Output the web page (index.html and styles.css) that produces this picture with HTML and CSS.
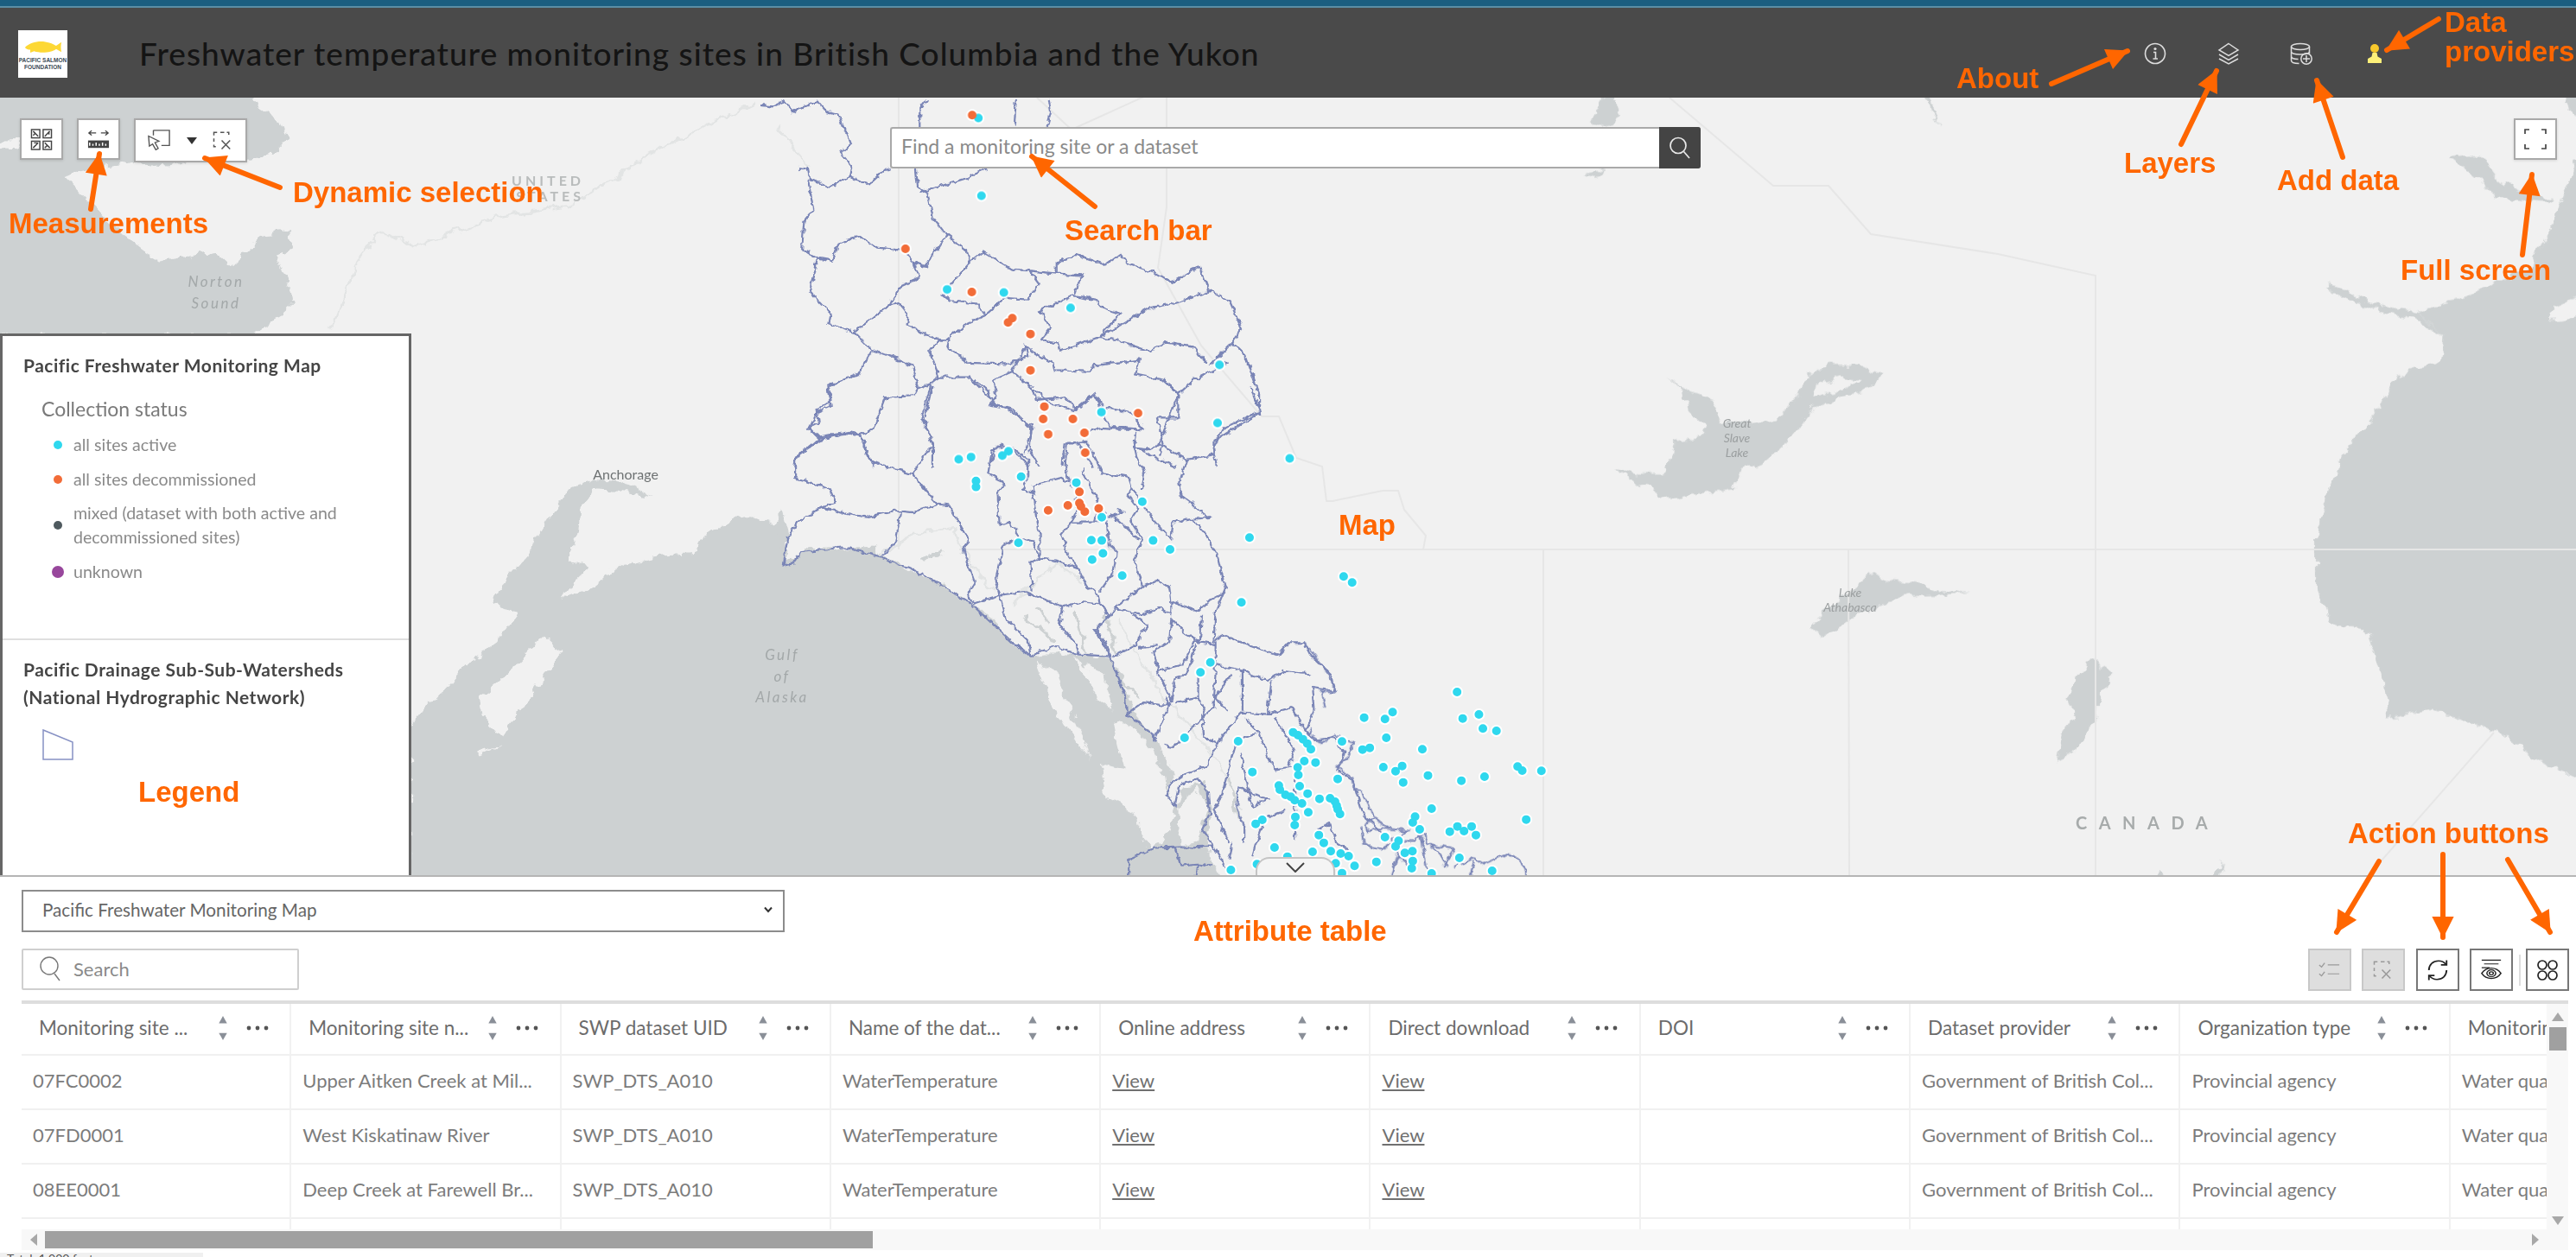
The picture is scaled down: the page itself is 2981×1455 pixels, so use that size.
FILE: index.html
```html
<!DOCTYPE html>
<html lang="en">
<head>
<meta charset="utf-8">
<title>Freshwater temperature monitoring sites in British Columbia and the Yukon</title>
<link rel="stylesheet" href="styles.css">
</head>
<body>
<svg class="defs" width="0" height="0" aria-hidden="true">
  <defs>
    <symbol id="i-sort" viewBox="0 0 12 32"><path d="M6 1l5 9H1z" fill="#8a8f98"/><path d="M6 31l5-9H1z" fill="#8a8f98"/></symbol>
    <symbol id="i-more" viewBox="0 0 26 6"><circle cx="3" cy="3" r="2.4" fill="#555"/><circle cx="13" cy="3" r="2.4" fill="#555"/><circle cx="23" cy="3" r="2.4" fill="#555"/></symbol>
    <symbol id="i-clear" viewBox="0 0 32 32" preserveAspectRatio="none"><path d="M2 8V3h5M12 3h6M22 3h3v4M2 13v5M2 23v3h3" fill="none" stroke="currentColor" stroke-width="2"/><path d="M14 16l13 14M27 16L14 30" fill="none" stroke="currentColor" stroke-width="2"/></symbol>
    <filter id="rough" filterUnits="userSpaceOnUse" x="880" y="113" width="1060" height="900">
      <feTurbulence type="fractalNoise" baseFrequency="0.13" numOctaves="2" seed="4"/>
      <feDisplacementMap in="SourceGraphic" scale="7" xChannelSelector="R" yChannelSelector="G"/>
    </filter>
    <filter id="coast" filterUnits="userSpaceOnUse" x="-20" y="90" width="3040" height="950">
      <feTurbulence type="fractalNoise" baseFrequency="0.07" numOctaves="3" seed="9"/>
      <feDisplacementMap in="SourceGraphic" scale="14" xChannelSelector="R" yChannelSelector="G"/>
    </filter>
    <g id="sheds">
      <g transform="translate(850 100) scale(.4464 .3333)">
        <path d="M50 40L60 65L100 70L130 50L150 90L215 50L240 90L270 100L300 200L275 230L305 280L300 315L350 340L390 290L405 285"/>
        <path d="M165 290L170 280L190 285L195 320L245 350L300 315M190 320L205 430L180 470L175 565L215 595L195 710L250 790L245 825L310 855L355 915"/>
        <path d="M215 595L255 605L270 545L325 520L370 560L440 570L465 610L495 625L550 515L600 570L610 610L645 575L720 635L765 640L835 650L900 655L880 725"/>
        <path d="M465 610L480 665L430 695L400 760L425 750L450 790L445 830L530 880L550 880L600 825L650 795L700 735L760 740L790 685L765 640M650 795L630 755L560 745L540 725L590 640L610 610M310 855L400 760"/>
        <path d="M530 880L555 880L550 905L610 960L710 965L760 935L755 900L780 930L825 960L830 985L925 990L930 970L1050 950L1040 1000L1115 1020L1150 1070L1190 1020L1280 960L1235 965L1290 890L1325 935L1360 1070L1360 1130L1265 1190L1240 1260L1250 1320"/>
        <path d="M880 725L790 780L800 790L820 840L795 880L840 890L845 920L945 870L1000 790L955 770L935 740L880 730M945 870L1075 770L1150 750L1235 710L1285 750L1315 840L1290 890M835 650L835 610L885 585L960 620L1000 580L1020 615L1095 650L1135 680L1205 625L1230 710M945 870L990 880L1075 920L1120 890L1190 905L1225 960"/>
        <path d="M755 900L720 990L765 1040L820 1100L880 1125L930 1070L960 1115L1030 1135L1060 1190L1000 1190L950 1185L915 1200M720 990L670 1020L680 1075L660 1105L720 1120L770 1190L765 1260L790 1320"/>
        <path d="M355 915L410 940L460 970L475 1050L510 1030L530 1010L610 1010L660 1080M530 1010L505 920L530 880M355 920L320 1000L240 1040L250 1110L215 1130L195 1185L220 1220L160 1290L155 1320M475 1050L465 1075L390 1080L360 1190L325 1210L345 1280L360 1320M220 1220L300 1200L325 1210M510 1030L485 1150L515 1240L515 1320"/>
        <path d="M660 1320L680 1250L720 1260L765 1320M850 1320L855 1240L890 1240L930 1320M1040 1200L1035 1250L1095 1290L1145 1320M1095 1150L1110 1240L1100 1280M1150 1070L1150 1150L1095 1150"/>
        <path d="M480 140L480 80L500 45M725 140L730 45M810 140L820 90L815 45M470 285L475 350L500 370L515 460L550 515M480 370L540 345L600 320L655 285"/>
      </g>
      <g transform="translate(900 440) scale(.4464 .3827)">
        <path d="M130 15L140 60L100 90L105 130L80 145L110 180L45 235L45 295L135 330L150 370L115 385L180 405L235 415L310 395L350 400L415 375L445 380L470 430L495 490L480 510L510 610L490 655L510 675L575 650L640 640L740 685L790 670L835 675L860 715"/>
        <path d="M115 385L50 430L25 480L15 560L40 555L60 520L170 505L270 535L380 590L500 675L550 730L610 795L655 835L715 805L780 830L860 835M320 400L305 490L270 530M215 170L240 245L350 285L415 375M350 285L385 215L405 205L380 120L400 20M110 180L180 160L215 170"/>
        <path d="M575 650L590 720L650 790L655 835M575 650L565 600L585 500L630 480L660 490L680 540L720 545L780 570L800 620L830 650L835 675M680 540L655 550L660 640M740 685L730 740L775 800L780 830M835 675L860 715L825 750L865 835M860 715L875 690L940 710L990 690L1020 710L1020 670L1090 700L1120 665L1160 640"/>
        <path d="M630 480L600 430L575 440L570 340L590 310L545 285L555 215L580 195L615 210L650 240L650 290L635 330L665 345L660 320L735 295L760 315L745 260L750 190L800 185L825 240L840 280L910 295L920 330L905 345L935 390L915 425L945 480L925 545L945 625L870 690M660 345L680 470L680 540M735 295L790 330L770 360L775 400L760 430L820 430L830 360L800 300L790 270M760 430L735 465L755 535L780 570M820 430L870 410L895 400L880 390M850 400L860 500L880 520L870 580L835 640M870 410L935 480"/>
        <path d="M945 625L985 605L1015 625L1020 670M920 330L965 410L1020 480L1025 430L1075 420L1105 460L1140 530L1160 630L1135 700L1130 790L1150 770L1220 800L1280 825L1300 830L1325 795L1365 795L1380 830L1435 890L1445 940L1385 930L1390 1000L1370 1060M1025 430L1060 420"/>
        <path d="M920 180L930 230L950 280L945 330M920 205L960 210L990 195L1060 240L1040 310L1045 350L1120 415L1075 420M1060 240L1130 225L1130 185L1205 130L1250 100L1225 20M1000 0L1040 40L985 200M950 150L860 140L820 40L775 90L745 50L670 60L660 20M660 140L600 90L555 70L545 30L510 0M660 140L640 220M950 150L920 100"/>
        <path d="M820 750L860 835L900 950L905 1010L975 1075L975 1090L1015 980L1005 960M905 1010L950 975L1005 985L1020 970L985 880M985 880L975 820L1015 790L1020 720M930 810L985 800M870 835L930 800L945 760L960 740L920 710M1020 720L1060 770L1095 790L1100 710"/>
        <path d="M1020 970L1030 900L1060 890L1085 800M985 880L1050 860L1080 790L1135 800M1135 790L1135 880M1135 860L1210 880L1270 910L1310 880L1380 890M1030 975L1090 960L1110 1010L1130 990L1135 880M1090 960L1090 880M1110 1010L1060 1070L1025 1110L1000 1105"/>
        <path d="M1100 1010L1105 1080L1140 1100L1110 1170L1060 1190L1020 1220L1005 1250L1030 1285L1040 1225L1090 1205L1115 1245L1120 1310L1100 1360L1130 1410M1140 1100L1170 1050L1200 1005L1270 1010L1280 910M1205 880L1205 1000M1175 890L1135 960L1165 1000M1270 1010L1330 990L1370 1060L1390 1090L1440 1080L1470 1130L1450 1180L1490 1210L1520 1320L1568 1370"/>
        <path d="M1210 1020L1250 1070L1270 1140L1290 1180L1340 1170M1240 1070L1190 1090L1170 1170L1150 1260L1130 1300L1170 1400M1200 1130L1230 1290L1270 1270L1195 1230L1190 1290L1210 1350L1210 1400M1290 1020L1340 1120L1320 1170M1340 1200L1340 1390M1250 1330L1320 1300M1400 1360L1430 1340L1450 1400L1480 1420M1180 1400L1170 1450M1260 1330L1240 1400L1230 1440"/>
        <path d="M910 1500L910 1450L975 1415L1130 1410L1170 1490M1030 1415L1045 1470L1090 1465L1085 1500M1090 1465L1125 1470"/>
      </g>
      <g transform="translate(1300 750) scale(.3827 .3333)">
        <path d="M640 150L620 90L560 0M640 155L600 150L610 210M570 280L560 300L600 330L640 305L695 330L680 380L645 410L690 450L695 480L720 500L740 545L760 590L735 610L740 640L770 625L860 635L820 670L790 650M760 590L800 625M720 620L725 680L780 700L810 680L840 725"/>
        <path d="M840 670L880 670L905 640L920 680L1000 700L965 760M1000 760L1060 730L1090 750L1160 715L1190 730L1215 765L1218 790M925 680L960 720L980 760M810 790L830 720L870 770M900 650L920 790M1050 790L1060 740"/>
      </g>
    </g>
    <g id="dots-c">
      <path transform="translate(850 100) scale(.4464 .3333)" d="M632 110h.1M640 380h.1M551 705h.1M698 716h.1M871 769h.1M1257 967h.1M951 1131h.1M1252 1169h.1M581 1295h.1M613 1287h.1M694 1282h.1M710 1267h.1M1439 1292h.1"/>
      <path transform="translate(900 440) scale(.4464 .3827)" d="M631 292h.1M514 305h.1M514 323h.1M774 310h.1M945 368h.1M840 415h.1M624 492h.1M813 484h.1M840 485h.1M843 524h.1M815 543h.1M893 591h.1M973 485h.1M1017 512h.1M1223 476h.1M1467 594h.1M1489 612h.1M1202 672h.1"/>
      <path transform="translate(1300 750) scale(.3827 .3333)" d="M263 50h.1M233 85h.1M1009 153h.1M814 223h.1M791 247h.1M728 242h.1M1026 245h.1M1075 231h.1M1087 280h.1M1128 288h.1M795 312h.1M661 325h.1M723 353h.1M745 347h.1M904 352h.1M513 293h.1M528 303h.1M543 317h.1M556 332h.1M567 352h.1M185 312h.1M347 324h.1M547 393h.1M581 398h.1M527 415h.1M1192 412h.1M1206 426h.1M1264 427h.1M786 414h.1M843 410h.1M823 428h.1M921 443h.1M846 467h.1M1022 461h.1M1092 447h.1M390 431h.1M529 441h.1M648 455h.1M533 480h.1M470 478h.1M473 492h.1M490 510h.1M506 517h.1M518 529h.1M557 506h.1M593 524h.1M625 522h.1M640 534h.1M645 548h.1M655 577h.1M648 560h.1M540 540h.1M932 558h.1M882 586h.1M875 606h.1M896 630h.1M520 587h.1M559 571h.1M518 615h.1M420 597h.1M400 611h.1M1218 596h.1M1010 620h.1M1053 620h.1M987 638h.1M1030 636h.1M1066 650h.1M591 650h.1M606 677h.1M627 706h.1M657 714h.1M681 723h.1M791 657h.1M832 670h.1M823 689h.1M457 693h.1M572 708h.1M874 706h.1M851 712h.1M875 740h.1M872 765h.1M642 748h.1M699 757h.1M765 743h.1M661 782h.1M404 751h.1M325 771h.1M496 725h.1M1016 729h.1M1115 774h.1M932 783h.1"/>
    </g>
    <g id="dots-o">
      <path transform="translate(850 100) scale(.4464 .3333)" d="M616 100h.1M443 564h.1M615 714h.1M720 805h.1M709 820h.1M767 860h.1M767 986h.1M803 1112h.1M800 1155h.1M877 1155h.1M1046 1135h.1M813 1208h.1M907 1203h.1M909 1272h.1"/>
      <path transform="translate(900 440) scale(.4464 .3827)" d="M782 338h.1M752 379h.1M782 372h.1M786 382h.1M796 398h.1M832 388h.1M701 394h.1"/>
    </g>
    <marker id="head" viewBox="0 0 10 10" refX="9.5" refY="5" markerWidth="4.6" markerHeight="4.2" orient="auto"><path d="M0 0L10 5L0 10z" fill="#ff6600"/></marker>
  </defs>
</svg>

<div class="app">
  <div class="topline"></div>
  <header class="header">
    <div class="logo">
      <svg class="logo-fish" viewBox="0 0 50 20"><path d="M1 11C8 4 22 1 33 5C37 6 40 8 42 9L49 4C48 8 48 13 49 17L42 13C36 18 22 19 13 16L8 18L8 14C5 14 3 13 1 11Z" fill="#fdd835"/></svg>
      <span class="logo-text">PACIFIC SALMON FOUNDATION</span>
    </div>
    <h1 class="title">Freshwater temperature monitoring sites in British Columbia and the Yukon</h1>
    <nav class="header-icons">
      <span class="hicon"><svg width="26" height="26" viewBox="0 0 26 26" fill="none" stroke="#ddd" stroke-width="1.6"><circle cx="13" cy="13" r="11.5"/><circle cx="13" cy="7.5" r="1.6" fill="#ddd" stroke="none"/><path d="M11 11.5h2.5v7M10.5 19h5.5"/></svg></span>
      <span class="hicon"><svg width="26" height="26" viewBox="0 0 26 26" fill="none" stroke="#ddd" stroke-width="1.5"><path d="M13 1.5L24 9L13 15.5L2 9z"/><path d="M2 14l11 6.5L24 14M2 19l11 6L24 19"/></svg></span>
      <span class="hicon"><svg width="26" height="26" viewBox="0 0 26 26" fill="none" stroke="#ddd" stroke-width="1.5"><ellipse cx="12" cy="5" rx="10.5" ry="3.5"/><path d="M1.5 5v16c0 2.500 5 3.500 9 3.500M22.500 5v8M1.500 10.500c0 2.500 5 3.500 10.500 3.500s10.500-1 10.500-3.500M1.500 16c0 2.500 4 3.500 8 3.500"/><circle cx="19" cy="19" r="6.200"/><path d="M19 15v8M15 19h8"/></svg></span>
      <span class="hicon"><svg width="16" height="22" viewBox="0 0 16 22"><ellipse cx="8" cy="5" rx="5" ry="5" fill="#f8c92c"/><path d="M5.500 10h5l1 4.500L16 17v5H0v-5l4.500-2.500z" fill="#fdf079"/></svg></span>
    </nav>
  </header>

  <main class="map">
    <svg class="basemap" viewBox="0 113 2981 900" preserveAspectRatio="none">
      <rect x="0" y="113" width="2981" height="900" fill="#f1f1f1"/>
      <g class="water" filter="url(#coast)">
        <g transform="translate(0 113) scale(.6378 .574)">
          <path d="M745 1620L745 1265L770 1230L810 1190L850 1140L900 1100L925 1060L940 1040L895 1020L905 990L960 920L985 870L1030 790L1080 770L1130 775L1180 805L1130 795L1080 785L1055 825L1050 880L1030 935L1075 940L1040 975L1020 1010L1070 990L1130 940L1190 925L1260 920L1280 880L1350 840L1405 860L1420 835L1430 880L1425 940L1470 910L1590 905L1590 1620Z"/>
          <path d="M-30 -30L455 -30L470 20L510 50L520 80L495 110L450 125L400 120L300 135L240 130L170 140L115 155L160 205L215 270L290 330L390 310L420 340L470 285L525 265L530 300L500 320L525 380L530 420L510 440L450 480L-30 480Z"/>
          <path class="land" d="M870 1210L930 1150L985 1085L1020 1120L960 1210L910 1290L875 1250ZM1025 1010L1070 945L1030 935L1050 880L1058 825L1080 800L1110 850L1100 960ZM865 1320L910 1305L870 1325ZM-30 88L40 85L30 105L-30 100Z"/>
        </g>
        <g transform="translate(900 440) scale(.4464 .3827)">
          <path d="M0 460L20 560L60 520L170 503L270 535L380 590L500 675L550 720L610 795L655 835L690 830L760 830L860 835L895 900L920 1000L975 1080L1000 1130L1030 1190L1010 1250L1030 1290L1050 1230L1100 1210L1130 1300L1110 1400L1170 1560L0 1560Z"/>
          <path class="land" d="M668 845L720 880L760 1000L790 1080L810 1165L800 1130L770 1090L740 1030L725 1030L700 940ZM770 840L850 900L870 1000L830 960L800 900ZM870 1030L930 1060L960 1100L1000 1190L1030 1300L1000 1400L960 1410L920 1300L850 1260L840 1160L900 1180L880 1090ZM1040 1295L1085 1225L1112 1300L1092 1390L1045 1402Z"/>
        </g>
        <g transform="translate(1800 113) scale(.753 .574)">
          <path d="M1568 130L1530 260L1500 340L1400 400L1330 430L1365 480L1360 530L1290 560L1270 620L1210 720L1190 780L1170 880L1170 990L1190 1060L1245 1070L1270 1170L1280 1250L1350 1235L1450 1280L1500 1330L1600 1395L1600 130Z"/>
          <path class="land" d="M1600 385L1535 420L1530 450L1600 440Z"/>
          <path d="M1375 120L1420 112L1450 165L1480 190L1535 205L1530 212L1445 203L1418 165ZM1548 -20L1600 -20L1600 60L1560 40ZM1185 375L1200 380L1260 420L1330 430L1365 480L1320 445L1260 428L1195 395Z"/>
          <path d="M168 560L200 590L240 610L255 650L305 660L340 650L380 590L385 560L420 538L470 540L505 560L480 590L440 605L395 625L380 655L350 705L315 738L285 750L275 790L210 800L175 808L130 780L90 750L130 760L165 760L185 695L225 685L230 660L205 630L195 590Z"/>
          <path class="land" d="M400 580L440 565L470 570L435 590L395 605Z"/>
          <path d="M390 1065L420 1030L450 1000L485 958L510 975L560 980L590 995L640 998L590 1003L550 1005L510 1018L470 1040L430 1075L410 1090Z"/>
          <path d="M800 1170L825 1135L838 1145L855 1160L840 1200L830 1260L795 1320L770 1340L780 1280L800 1240L785 1220Z"/>
          <path d="M905 1585L930 1560L945 1585ZM1005 1585L1025 1540L1020 1585ZM50 50L85 -20L100 40L70 60ZM40 155L85 142L60 160ZM560 -20L570 -20L590 60Z"/>
        </g>
      </g>
      <g class="borders">
        <path d="M1040 113V636M1110 636H2981M1786 636V1013M1932 113L2052 215L2116 215L2165 271L2312 294L2425 319V1013M2139 636L2140 1013M2886 848L2741 1013"/>
        <path d="M1200 113L1240 150L1350 100L1350 240L1340 310L1390 400L1460 482L1480 482L1500 530L1530 540L1535 580L1542 580L1600 568L1618 568L1625 590L1650 620L1647 636"/>
      </g>
      <g class="rivers" filter="url(#coast)">
        <g transform="translate(0 113) scale(.6378 .574)"><path d="M600 470L650 330L690 270L750 300L900 240L1030 220L1200 100L1370 10M1410 60L1470 140"/></g>
        <g transform="translate(900 440) scale(.4464 .3827)"><path d="M270 535L350 460L460 450L480 520L560 640M610 680L720 550L790 610M880 720L1000 960L1140 1150L1200 1300"/></g>
        <g class="channels" transform="translate(900 440) scale(.4464 .3827)"><path d="M640 710L720 790M670 690L700 730M770 700L800 830M850 720L880 830M370 545L430 520M870 880L940 960M1170 1200L1190 1320"/></g>
      </g>
      <g filter="url(#rough)">
        <use href="#sheds" class="shed-line"/>
      </g>
      <use href="#dots-c" class="dot-halo"/>
      <use href="#dots-o" class="dot-halo"/>
      <use href="#dots-c" class="dot-c"/>
      <use href="#dots-o" class="dot-o"/>
      <g class="places">
        <text class="pl-spaced" x="676" y="215" text-anchor="end">UNITED</text>
        <text class="pl-spaced" x="676" y="233" text-anchor="end">STATES</text>
        <text class="pl-water" x="250" y="332" text-anchor="middle">Norton</text>
        <text class="pl-water" x="250" y="357" text-anchor="middle">Sound</text>
        <text class="pl-city" x="724" y="555" text-anchor="middle">Anchorage</text>
        <text class="pl-water" x="905" y="764" text-anchor="middle">Gulf</text>
        <text class="pl-water" x="905" y="789" text-anchor="middle">of</text>
        <text class="pl-water" x="905" y="813" text-anchor="middle">Alaska</text>
        <text class="pl-lake" x="2010" y="495" text-anchor="middle">Great</text>
        <text class="pl-lake" x="2010" y="512" text-anchor="middle">Slave</text>
        <text class="pl-lake" x="2010" y="529" text-anchor="middle">Lake</text>
        <text class="pl-lake" x="2141" y="691" text-anchor="middle">Lake</text>
        <text class="pl-lake" x="2141" y="708" text-anchor="middle">Athabasca</text>
        <text class="pl-country" x="2402" y="960">CANADA</text>
      </g>
    </svg>

    <div class="map-tools">
      <button class="tool">
        <svg width="26" height="25" viewBox="0 0 26 26" fill="none" stroke="#444" stroke-width="1.5"><rect x="1" y="1" width="10" height="10"/><rect x="15" y="1" width="10" height="10"/><rect x="1" y="15" width="10" height="10"/><rect x="15" y="15" width="10" height="10"/><path d="M3 3l6 6M3 8l3-3M23 3l-6 6M22 3v4M3 23l6-6M4 17h5M17 17l6 6M17 23l3-3"/></svg>
      </button>
      <button class="tool">
        <svg width="26" height="22" viewBox="0 0 28 28" preserveAspectRatio="none" fill="none" stroke="#444" stroke-width="1.600"><path d="M11 5H2M5.500 1.500L2 5l3.500 3.500M17 5h9M22.500 1.500L26 5l-3.500 3.500"/><rect x="1" y="16" width="26" height="11" fill="#444" stroke="none"/><path d="M3 24V19M7 24V21M11 24V19M15 24V21M19 24V19M23 24V21" stroke="#fff"/></svg>
      </button>
      <div class="tool tool-group">
        <svg width="26" height="25" viewBox="0 0 28 30" preserveAspectRatio="none" fill="none" stroke="#555" stroke-width="1.500"><path d="M7 1H27V22H17M7 1V8"/><path d="M1 9L14 16L9 18L13 26L10 28L6 20L2 23Z" fill="#fff"/></svg>
        <svg width="12" height="8" viewBox="0 0 12 8"><path d="M0 0H12L6 8Z" fill="#333"/></svg>
        <svg class="clear-icon" width="24" height="23"><use href="#i-clear" width="24" height="23"/></svg>
      </div>
    </div>

    <div class="searchbar">
      <span class="searchbar-text">Find a monitoring site or a dataset</span>
      <button class="searchbar-btn"><svg width="26" height="28" viewBox="0 0 26 28" fill="none" stroke="#e8e8e8" stroke-width="1.700"><circle cx="11" cy="11.500" r="9"/><path d="M17.500 18.500L24 26"/></svg></button>
    </div>

    <button class="tool fullscreen">
      <svg width="26" height="24" viewBox="0 0 26 24" fill="none" stroke="#444" stroke-width="1.700"><path d="M1 6V1H6M20 1H25V6M1 18V23H6M20 23H25V18"/></svg>
    </button>

    <aside class="legend">
      <section class="legend-section first">
        <h2 class="legend-title">Pacific Freshwater Monitoring Map</h2>
        <h3 class="legend-sub">Collection status</h3>
        <ul class="legend-list">
          <li><i class="swatch sw-cyan"></i><span>all sites active</span></li>
          <li><i class="swatch sw-orange"></i><span>all sites decommissioned</span></li>
          <li><i class="swatch sw-dark"></i><span>mixed (dataset with both active and decommissioned sites)</span></li>
          <li><i class="swatch sw-purple"></i><span>unknown</span></li>
        </ul>
      </section>
      <section class="legend-section">
        <h2 class="legend-title second">Pacific Drainage Sub-Sub-Watersheds (National Hydrographic Network)</h2>
        <svg class="legend-poly" width="36" height="36" viewBox="0 0 36 36"><path d="M1 1L35 15V35H1Z" fill="#fff" stroke="#8791c4" stroke-width="1.500"/></svg>
      </section>
    </aside>

    <button class="collapse-tab"><svg width="24" height="12" viewBox="0 0 24 12" fill="none" stroke="#444" stroke-width="2"><path d="M2 1L12 11L22 1"/></svg></button>
  </main>

  <section class="panel">
    <div class="layer-select"><span>Pacific Freshwater Monitoring Map</span><svg width="10" height="8" viewBox="0 0 10 8" fill="none" stroke="#333" stroke-width="2"><path d="M1 1.500L5 6L9 1.500"/></svg></div>
    <div class="table-actions">
      <label class="table-search">
        <svg width="24" height="30" viewBox="0 0 24 30" fill="none" stroke="#777" stroke-width="1.400"><circle cx="11" cy="12" r="10"/><path d="M17 21L23 29"/></svg>
        <span>Search</span>
      </label>
      <div class="actions">
        <button class="act off"><svg width="25" height="19" viewBox="0 0 28 24" preserveAspectRatio="none" fill="none" stroke="#999" stroke-width="1.500"><path d="M1 5l3 3 4-6M12 5h15M1 18l3 3 4-6M12 18h15"/></svg></button>
        <button class="act off clear-off"><svg width="24" height="23"><use href="#i-clear" width="24" height="23"/></svg></button>
        <button class="act"><svg width="26" height="26" viewBox="0 0 28 34" preserveAspectRatio="none" fill="none" stroke="#222" stroke-width="2"><path d="M3 17C3 9 8 3 15 3C19 3 22 5 24 8M25 17C25 25 20 31 13 31C9 31 6 29 4 26"/><path d="M25 2V9H18M3 32V25H10"/></svg></button>
        <button class="act"><svg width="26" height="26" viewBox="0 0 28 36" preserveAspectRatio="none" fill="none" stroke="#222" stroke-width="1.600"><path d="M2 2H26M5 8H23M2 14H12M2 23C8 12 20 12 26 23C20 34 8 34 2 23Z"/><circle cx="14" cy="23" r="5.500"/><circle cx="14" cy="23" r="2.500"/></svg></button>
        <i class="act-sep"></i>
        <button class="act"><svg width="24" height="24" viewBox="0 0 24 24" fill="none" stroke="#222" stroke-width="1.700"><circle cx="6" cy="6" r="5"/><circle cx="18" cy="6" r="5"/><circle cx="6" cy="18" r="5"/><circle cx="18" cy="18" r="5"/></svg></button>
      </div>
    </div>

    <div class="table-view">
      <div class="table-clip">
        <div class="grid">
          <div class="th"><span>Monitoring site ...</span><svg class="s"><use href="#i-sort"/></svg><svg class="m"><use href="#i-more"/></svg></div>
          <div class="th"><span>Monitoring site n...</span><svg class="s"><use href="#i-sort"/></svg><svg class="m"><use href="#i-more"/></svg></div>
          <div class="th"><span>SWP dataset UID</span><svg class="s"><use href="#i-sort"/></svg><svg class="m"><use href="#i-more"/></svg></div>
          <div class="th"><span>Name of the dat...</span><svg class="s"><use href="#i-sort"/></svg><svg class="m"><use href="#i-more"/></svg></div>
          <div class="th"><span>Online address</span><svg class="s"><use href="#i-sort"/></svg><svg class="m"><use href="#i-more"/></svg></div>
          <div class="th"><span>Direct download</span><svg class="s"><use href="#i-sort"/></svg><svg class="m"><use href="#i-more"/></svg></div>
          <div class="th"><span>DOI</span><svg class="s"><use href="#i-sort"/></svg><svg class="m"><use href="#i-more"/></svg></div>
          <div class="th"><span>Dataset provider</span><svg class="s"><use href="#i-sort"/></svg><svg class="m"><use href="#i-more"/></svg></div>
          <div class="th"><span>Organization type</span><svg class="s"><use href="#i-sort"/></svg><svg class="m"><use href="#i-more"/></svg></div>
          <div class="th"><span>Monitoring</span></div>

          <div class="td">07FC0002</div><div class="td">Upper Aitken Creek at Mil...</div><div class="td">SWP_DTS_A010</div><div class="td">WaterTemperature</div><div class="td"><a>View</a></div><div class="td"><a>View</a></div><div class="td"></div><div class="td">Government of British Col...</div><div class="td">Provincial agency</div><div class="td">Water quality</div>
          <div class="td">07FD0001</div><div class="td">West Kiskatinaw River</div><div class="td">SWP_DTS_A010</div><div class="td">WaterTemperature</div><div class="td"><a>View</a></div><div class="td"><a>View</a></div><div class="td"></div><div class="td">Government of British Col...</div><div class="td">Provincial agency</div><div class="td">Water quality</div>
          <div class="td">08EE0001</div><div class="td">Deep Creek at Farewell Br...</div><div class="td">SWP_DTS_A010</div><div class="td">WaterTemperature</div><div class="td"><a>View</a></div><div class="td"><a>View</a></div><div class="td"></div><div class="td">Government of British Col...</div><div class="td">Provincial agency</div><div class="td">Water quality</div>
          <div class="td"></div><div class="td"></div><div class="td"></div><div class="td"></div><div class="td"></div><div class="td"></div><div class="td"></div><div class="td"></div><div class="td"></div><div class="td"></div>
        </div>
      </div>
      <div class="vscroll">
        <svg width="14" height="10" viewBox="0 0 14 10"><path d="M7 0L14 10H0Z" fill="#a8a8a8"/></svg>
        <i class="vthumb"></i>
        <svg class="vdown" width="14" height="10" viewBox="0 0 14 10"><path d="M7 10L14 0H0Z" fill="#a8a8a8"/></svg>
      </div>
      <div class="hscroll">
        <svg width="8" height="14" viewBox="0 0 8 14"><path d="M0 7L8 0V14Z" fill="#a8a8a8"/></svg>
        <i class="hthumb"></i>
        <svg class="hright" width="8" height="14" viewBox="0 0 8 14"><path d="M8 7L0 0V14Z" fill="#a8a8a8"/></svg>
      </div>
    </div>
    <div class="status">Total: 1,000 features</div>
  </section>

  <svg class="notes" viewBox="0 0 2981 1455">
    <g class="arrows">
      <path d="M105 242L115 178" marker-end="url(#head)"/>
      <path d="M324 217L237 183" marker-end="url(#head)"/>
      <path d="M2374 97L2462 59" marker-end="url(#head)"/>
      <path d="M2524 167L2565 82" marker-end="url(#head)"/>
      <path d="M2711 182L2681 93" marker-end="url(#head)"/>
      <path d="M2822 22L2762 58" marker-end="url(#head)"/>
      <path d="M2919 295L2930 202" marker-end="url(#head)"/>
      <path d="M1267 239L1194 181" marker-end="url(#head)"/>
      <path d="M2753 997L2704 1079" marker-end="url(#head)"/>
      <path d="M2827 989V1085" marker-end="url(#head)"/>
      <path d="M2902 995L2951 1079" marker-end="url(#head)"/>
    </g>
    <g class="labels">
      <text x="10" y="270">Measurements</text>
      <text x="339" y="234">Dynamic selection</text>
      <text x="1232" y="278">Search bar</text>
      <text x="2458" y="200">Layers</text>
      <text x="2635" y="220">Add data</text>
      <text x="2778" y="324">Full screen</text>
      <text x="2264" y="102">About</text>
      <text x="2829" y="37">Data</text>
      <text x="2829" y="71">providers</text>
      <text x="1549" y="619">Map</text>
      <text x="160" y="928">Legend</text>
      <text x="1381" y="1089">Attribute table</text>
      <text x="2717" y="976">Action buttons</text>
    </g>
  </svg>
</div>
</body>
</html>
```
FILE: styles.css
```css
* { box-sizing: border-box; }
html, body { margin: 0; padding: 0; height: 100%; overflow: hidden; background: #fff; }
body { font-family: Lato, "Liberation Sans", sans-serif; color: #555; }
button { font: inherit; padding: 0; cursor: pointer; }
h1, h2, h3, ul { margin: 0; padding: 0; list-style: none; }
.defs { position: absolute; }

.app { position: relative; width: 2981px; height: 1455px; display: flex; flex-direction: column; }
.topline { height: 9px; background: #1b5e80; border-bottom: 2px solid #5b8ea5; flex: none; }

.header { height: 104px; flex: none; background: #4a4a4a; display: flex; align-items: center; padding-left: 21px; }
.logo { width: 57px; height: 55px; background: #fff; display: flex; flex-direction: column; align-items: center; margin-top: 3px; padding-top: 10px; flex: none; }
.logo-fish { width: 44px; height: 18px; }
.logo-text { font: 700 6.5px/7.5px "Liberation Sans", sans-serif; color: #3c4a55; text-align: center; margin-top: 3px; }
.title { margin-left: 83px; font: 500 37px/1 Lato, sans-serif; color: #141414; white-space: nowrap; letter-spacing: 1.03px; }
.header-icons { margin-left: auto; margin-right: 191px; display: flex; align-items: center; }
.hicon { width: 84.5px; display: flex; justify-content: center; align-items: center; margin-top: 2px; }

.map { position: relative; height: 900px; flex: none; overflow: hidden; background: #f1f1f1; }
.basemap { display: block; width: 2981px; height: 900px; }
.water path { fill: #cdd1d2; }
.water path.land { fill: #f1f1f1; }
.borders path { fill: none; stroke: #e6e6e6; stroke-width: 2; }
.rivers path { fill: none; stroke: #e2e4e4; stroke-width: 2.500; vector-effect: non-scaling-stroke; }
.rivers .channels path { stroke: #cdd1d2; stroke-width: 3.500; }
#sheds path { fill: none; vector-effect: non-scaling-stroke; }
.shed-line { stroke: #7a85b6; stroke-width: 2.200; }
#dots-c path, #dots-o path { fill: none; stroke-linecap: round; vector-effect: non-scaling-stroke; }
.dot-halo { stroke: #fff; stroke-width: 14; }
.dot-c { stroke: #2fd8ee; stroke-width: 10; }
.dot-o { stroke: #f26c38; stroke-width: 10; }
.pl-spaced { font: 700 16px Lato, sans-serif; letter-spacing: 4px; fill: #b9bcbc; }
.pl-water { font: italic 400 17px Lato, sans-serif; letter-spacing: 2.500px; fill: #a3a8a9; }
.pl-city { font: 400 16px Lato, sans-serif; fill: #6e7273; }
.pl-lake { font: italic 400 14px Lato, sans-serif; fill: #9b9fa0; }
.pl-country { font: 700 20px Lato, sans-serif; letter-spacing: 13.500px; fill: #a7abab; }

.map-tools { position: absolute; left: 23px; top: 24px; display: flex; gap: 16px; align-items: flex-start; }
.tool { width: 50px; height: 48px; background: #fff; border: 2px solid #a9a9a9; display: flex; align-items: center; justify-content: center; box-shadow: 0 1px 3px rgba(0,0,0,.12); }
.tool-group { width: 131px; height: 51px; justify-content: space-between; padding: 0 14px; }
.clear-icon { color: #555; }
.fullscreen { position: absolute; right: 22px; top: 24px; }

.searchbar { position: absolute; left: 1030px; top: 34px; width: 938px; height: 48px; display: flex; background: #fff; border: 2px solid #a9a9a9; border-right: 0; border-radius: 3px; align-items: stretch; }
.searchbar-text { flex: 1; padding-left: 11px; font-size: 23px; line-height: 41px; color: #8a8a8a; }
.searchbar-btn { width: 48px; margin: -2px 0; background: #444; border: 0; border-radius: 0 3px 3px 0; display: flex; align-items: center; justify-content: center; }

.legend { position: absolute; left: 0; top: 273px; bottom: 0; width: 476px; background: #fff; border: 3px solid #666; border-bottom: 0; }
.legend-section { padding: 20px 20px 0 24px; }
.legend-section.first { height: 352px; border-bottom: 2px solid #dfdfdf; }
.legend-title { font: 700 21px/32px Lato, sans-serif; color: #454545; letter-spacing: .5px; }
.legend-title.second { max-width: 420px; }
.first .legend-title { line-height: 28px; }
.legend-sub { font: 400 23px/28px Lato, sans-serif; color: #7a7a7a; margin: 22px 0 0 21px; }
.legend-list { margin: 14px 0 0 22px; font-size: 19.600px; line-height: 28px; color: #8a8a8a; }
.legend-list li { display: flex; align-items: center; padding-bottom: 11.500px; }
.legend-list span { margin-left: 13px; width: 330px; }
.swatch { width: 10px; height: 10px; border-radius: 50%; margin-left: 13px; flex: none; }
.sw-cyan { background: #2fd8ee; }
.sw-orange { background: #f26c38; }
.sw-dark { background: #4f5a5f; }
.sw-purple { background: #98479c; width: 14px; height: 14px; margin-left: 11px; margin-right: -2px; }
.legend-section:not(.first) { padding-top: 18px; }
.legend-poly { display: block; margin: 21px 0 0 22px; }

.collapse-tab { position: absolute; left: 1453px; bottom: 0; width: 92px; height: 21px; background: #f4f4f4; border: 2px solid #c4c4c4; border-bottom: 0; border-radius: 16px 16px 0 0; display: flex; align-items: center; justify-content: center; }

.panel { flex: 1; min-height: 0; border-top: 2px solid #b5b5b5; padding: 15px 8px 0 25px; background: #fff; overflow: hidden; }
.layer-select { width: 883px; height: 49px; border: 2px solid #8c8c8c; display: flex; align-items: center; justify-content: space-between; padding: 0 12px 3px 22px; font-size: 20.700px; color: #666; }
.table-actions { display: flex; justify-content: space-between; align-items: flex-start; margin-top: 19px; height: 60px; }
.table-search { width: 321px; height: 48px; border: 2px solid #cfcfcf; border-radius: 2px; display: flex; align-items: center; padding: 0 0 2px 19px; gap: 15px; font-size: 22px; color: #8a8a8a; }
.actions { display: flex; align-items: center; gap: 12.500px; }
.act { width: 50px; height: 49px; background: #fff; border: 2px solid #777; display: flex; align-items: center; justify-content: center; }
.act.off { background: #dedede; border-color: #c8c8c8; }
.clear-off { color: #999; }
.act-sep { width: 2px; height: 36px; background: #ddd; margin: 0 -6px; }

.table-view { display: grid; grid-template-columns: 2922px 25px; grid-template-rows: 261px 24px; width: 2947px; border-top: 4px solid #ddd; }
.table-clip { overflow: hidden; }
.grid { display: grid; grid-template-columns: repeat(10, 312.300px); grid-auto-rows: 63px; grid-template-rows: 60px; width: 3123px; }
.th, .td { border-right: 2px solid #f1f1f1; border-bottom: 2px solid #f0f0f0; display: flex; align-items: center; white-space: nowrap; overflow: hidden; padding-bottom: 3px; }
.th { padding-left: 20px; font-size: 22.500px; color: #6c6c6c; position: relative; }
.td { padding-left: 13px; padding-bottom: 5px; font-size: 22px; color: #7c7c7c; }
.td a { text-decoration: underline; color: #707070; }
.s { position: absolute; left: 227px; top: 13px; width: 12px; height: 30px; }
.m { position: absolute; left: 260px; top: 25px; width: 26px; height: 6px; }
.vscroll { background: #f8f8f8; position: relative; display: flex; flex-direction: column; align-items: center; padding-top: 10px; }
.vthumb { width: 20px; height: 27px; background: #a0a0a0; margin-top: 7px; }
.vdown { position: absolute; bottom: 5px; }
.hscroll { grid-column: 1 / 3; background: #f8f8f8; display: flex; align-items: center; padding-left: 10px; position: relative; }
.hthumb { width: 958px; height: 20px; background: #a0a0a0; margin-left: 9px; }
.hright { position: absolute; right: 34px; }
.status { width: 235px; margin-left: -25px; margin-top: 3px; height: 5px; overflow: hidden; background: #f0f0f0; font-size: 14px; line-height: 14px; color: #555; padding-left: 8px; }

.notes { position: absolute; left: 0; top: 0; width: 2981px; height: 1455px; pointer-events: none; }
.arrows path { fill: none; stroke: #ff6600; stroke-width: 6; stroke-linecap: round; }
.labels text { font: 700 33px "Liberation Sans", Arial, sans-serif; fill: #ff6600; }
```
